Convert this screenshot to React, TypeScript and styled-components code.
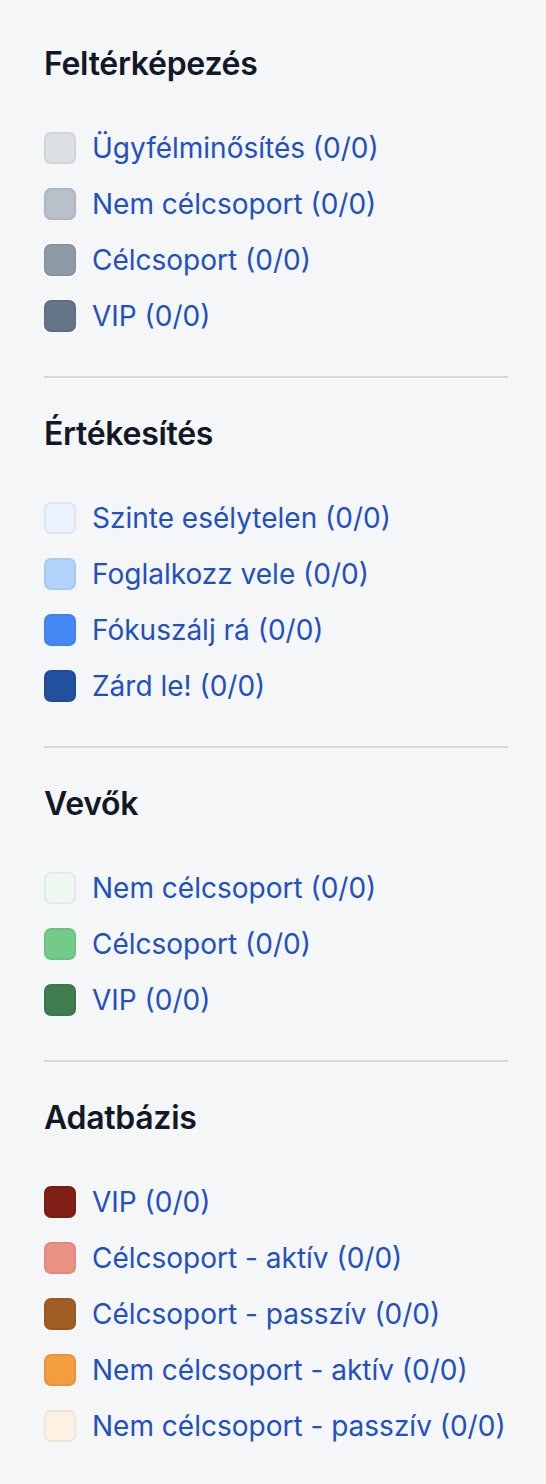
import React from "react";
import styled, { createGlobalStyle } from "styled-components";

const GlobalStyle = createGlobalStyle`
  html, body {
    margin: 0;
    padding: 0;
    background: #f5f6f8;
  }
  body {
    font-family: Inter, "Noto Sans", sans-serif;
  }
`;

const Page = styled.div`
  padding: 44px 38px 40px 44px;
  display: flex;
  flex-direction: column;
`;

const Section = styled.section`
  display: flex;
  flex-direction: column;
`;

const Heading = styled.h2`
  margin: 0;
  height: 40px;
  line-height: 40px;
  font-size: 32px;
  font-weight: 600;
  letter-spacing: -0.3px;
  color: #111827;
`;

const List = styled.ul`
  list-style: none;
  margin: 44px 0 0;
  padding: 0;
  display: flex;
  flex-direction: column;
  gap: 16px;
`;

const Row = styled.li`
  display: flex;
  align-items: center;
  gap: 16px;
  height: 40px;
`;

const Swatch = styled.span<{ $color: string }>`
  width: 32px;
  height: 32px;
  box-sizing: border-box;
  border-radius: 7px;
  background: ${(p) => p.$color};
  border: 2px solid rgba(0, 0, 0, 0.05);
  flex-shrink: 0;
`;

const Label = styled.span`
  font-size: 28px;
  line-height: 40px;
  color: #2150c0;
`;

const Divider = styled.hr`
  margin: 40px 0 36px;
  border: none;
  height: 2px;
  background: #d5d8dd;
`;

type Item = { label: string; color: string };
type Group = { title: string; items: Item[] };

const groups: Group[] = [
  {
    title: "Feltérképezés",
    items: [
      { label: "Ügyfélminősítés (0/0)", color: "#dcdfe4" },
      { label: "Nem célcsoport (0/0)", color: "#b9c0ca" },
      { label: "Célcsoport (0/0)", color: "#8f9aa7" },
      { label: "VIP (0/0)", color: "#657489" },
    ],
  },
  {
    title: "Értékesítés",
    items: [
      { label: "Szinte esélytelen (0/0)", color: "#ebf2fe" },
      { label: "Foglalkozz vele (0/0)", color: "#b4d4fc" },
      { label: "Fókuszálj rá (0/0)", color: "#4689f6" },
      { label: "Zárd le! (0/0)", color: "#22509f" },
    ],
  },
  {
    title: "Vevők",
    items: [
      { label: "Nem célcsoport (0/0)", color: "#eff8f1" },
      { label: "Célcsoport (0/0)", color: "#74cb88" },
      { label: "VIP (0/0)", color: "#3f7d4e" },
    ],
  },
  {
    title: "Adatbázis",
    items: [
      { label: "VIP (0/0)", color: "#7f1f16" },
      { label: "Célcsoport - aktív (0/0)", color: "#ea9385" },
      { label: "Célcsoport - passzív (0/0)", color: "#a05d23" },
      { label: "Nem célcsoport - aktív (0/0)", color: "#f49d3f" },
      { label: "Nem célcsoport - passzív (0/0)", color: "#fcf1e3" },
    ],
  },
];

export default function App() {
  return (
    <>
      <GlobalStyle />
      <Page>
        {groups.map((g, i) => (
          <React.Fragment key={g.title}>
            {i > 0 && <Divider />}
            <Section>
              <Heading>{g.title}</Heading>
              <List>
                {g.items.map((it) => (
                  <Row key={it.label}>
                    <Swatch $color={it.color} />
                    <Label>{it.label}</Label>
                  </Row>
                ))}
              </List>
            </Section>
          </React.Fragment>
        ))}
      </Page>
    </>
  );
}
